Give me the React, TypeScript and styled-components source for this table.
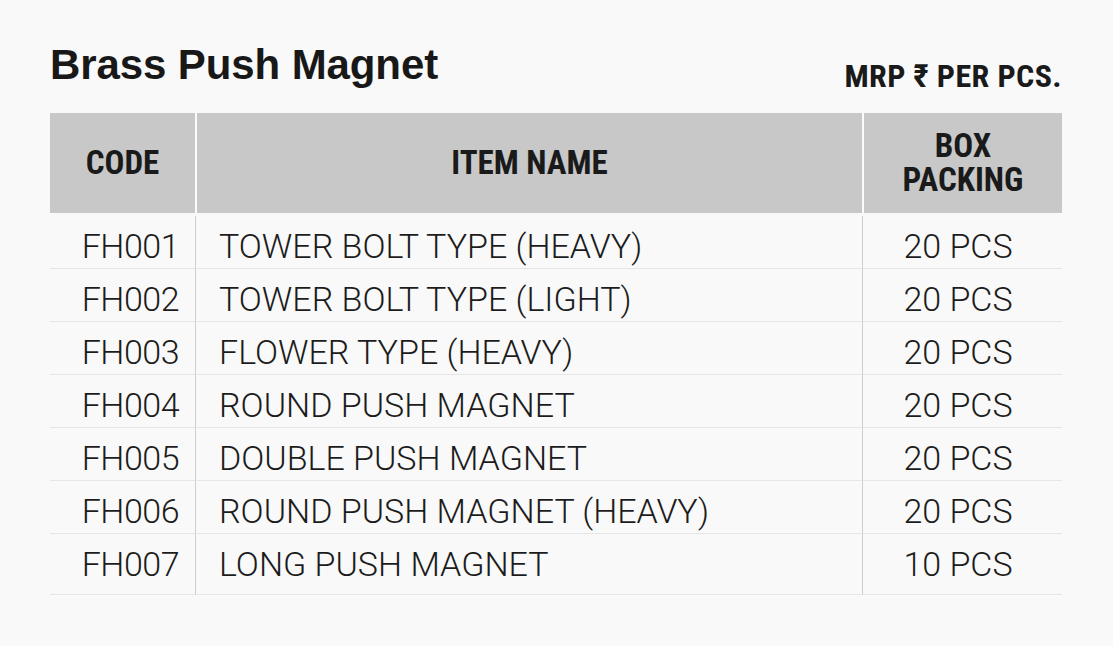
import React from "react";
import styled, { createGlobalStyle } from "styled-components";

const GlobalStyle = createGlobalStyle`
  html, body {
    margin: 0;
    padding: 0;
    background: #f9f9f9;
  }
  body {
    font-family: "Roboto", "Liberation Sans", Arial, sans-serif;
    color: #1c1c1c;
  }
`;

const Page = styled.div`
  width: 1113px;
  height: 646px;
  box-sizing: border-box;
  padding: 0 51px 0 50px;
  background: #f9f9f9;
`;

const TitleBar = styled.div`
  height: 113px;
  box-sizing: border-box;
  padding-top: 44px;
  display: flex;
  justify-content: space-between;
  align-items: flex-start;
`;

const Title = styled.h1`
  margin: 0;
  font-family: "Liberation Sans", Arial, sans-serif;
  font-weight: 700;
  font-size: 42px;
  line-height: 42px;
  letter-spacing: -0.1px;
  color: #181818;
`;

const Price = styled.div`
  margin-top: 17px;
  font-family: "Liberation Sans Narrow", "Roboto Condensed", "Roboto", sans-serif;
  font-weight: 700;
  font-size: 32px;
  line-height: 30px;
  letter-spacing: 0.4px;
  color: #1a1a1a;
`;

const HeaderRow = styled.div`
  display: grid;
  grid-template-columns: 147px 667px 198px;
  height: 100px;
`;

const HeaderCell = styled.div<{ $divider?: boolean }>`
  background: #c7c8c7;
  border-right: ${(p) => (p.$divider ? "2px solid #fbfbfb" : "none")};
  display: flex;
  flex-direction: column;
  align-items: center;
  justify-content: center;
  text-align: center;
  font-family: "Liberation Sans Narrow", "Roboto Condensed", "Roboto", sans-serif;
  font-weight: 700;
  font-size: 33px;
  line-height: 34px;
  color: #1a1a1a;
`;

const HeaderLine = styled.span`
  display: block;
`;

const Body = styled.div`
  padding-top: 3px;
`;

const Row = styled.div`
  display: grid;
  grid-template-columns: 146px 667px 199px;
  &:last-child > div {
    padding-bottom: 10px;
  }
`;

const Cell = styled.div<{ $align: "left" | "right" | "center"; $divider?: boolean }>`
  box-sizing: border-box;
  padding-top: 10px;
  padding-bottom: 2px;
  border-bottom: 1px solid #e6e6e6;
  border-right: ${(p) => (p.$divider ? "1px solid #cdcdcd" : "none")};
  text-align: ${(p) => p.$align};
  padding-left: ${(p) => (p.$align === "left" ? "23px" : "0")};
  padding-right: ${(p) =>
    p.$align === "right" ? "16px" : p.$align === "center" ? "9px" : "0"};
  letter-spacing: ${(p) => (p.$align === "right" ? "-0.5px" : "0")};
  font-family: "Roboto", "Liberation Sans", sans-serif;
  font-weight: 300;
  font-size: 34px;
  line-height: 40px;
  color: #1c1c1c;
  white-space: nowrap;
`;

const rows = [
  ["FH001", "TOWER BOLT TYPE (HEAVY)", "20 PCS"],
  ["FH002", "TOWER BOLT TYPE (LIGHT)", "20 PCS"],
  ["FH003", "FLOWER TYPE (HEAVY)", "20 PCS"],
  ["FH004", "ROUND PUSH MAGNET", "20 PCS"],
  ["FH005", "DOUBLE PUSH MAGNET", "20 PCS"],
  ["FH006", "ROUND PUSH MAGNET (HEAVY)", "20 PCS"],
  ["FH007", "LONG PUSH MAGNET", "10 PCS"],
];

export default function App() {
  return (
    <>
      <GlobalStyle />
      <Page>
        <TitleBar>
          <Title>Brass Push Magnet</Title>
          <Price>MRP ₹ PER PCS.</Price>
        </TitleBar>
        <HeaderRow>
          <HeaderCell $divider>CODE</HeaderCell>
          <HeaderCell $divider>ITEM NAME</HeaderCell>
          <HeaderCell>
            <HeaderLine>BOX</HeaderLine>
            <HeaderLine>PACKING</HeaderLine>
          </HeaderCell>
        </HeaderRow>
        <Body>
          {rows.map(([code, name, box]) => (
            <Row key={code}>
              <Cell $align="right" $divider>
                {code}
              </Cell>
              <Cell $align="left" $divider>
                {name}
              </Cell>
              <Cell $align="center">{box}</Cell>
            </Row>
          ))}
        </Body>
      </Page>
    </>
  );
}
